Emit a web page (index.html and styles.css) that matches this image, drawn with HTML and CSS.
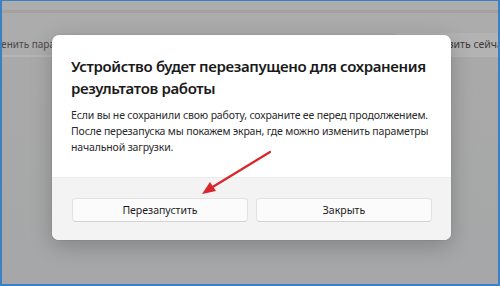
FILE: index.html
```html
<!DOCTYPE html>
<html lang="ru">
<head>
<meta charset="utf-8">
<link rel="stylesheet" href="styles.css">
</head>
<body>
<div class="screen">
  <div class="topbar"></div>
  <div class="band">
    <div class="row">
      <span class="row-text">Изменить параметры</span>
      <span class="row-btn">Перезагрузить сейчас</span>
    </div>
  </div>
  <div class="lower"></div>

  <div class="dialog">
    <div class="dialog-body">
      <h1 class="title">Устройство будет перезапущено для сохранения результатов работы</h1>
      <p class="text">Если вы не сохранили свою работу, сохраните ее перед продолжением. После перезапуска мы покажем экран, где можно изменить параметры начальной загрузки.</p>
    </div>
    <div class="dialog-footer">
      <button class="btn">Перезапустить</button>
      <button class="btn">Закрыть</button>
    </div>
  </div>

  <svg class="arrow" width="500" height="286" viewBox="0 0 500 286">
    <line x1="270" y1="152" x2="211" y2="188" stroke="#d8262a" stroke-width="2.2" stroke-linecap="round"/>
    <polygon points="202,194 210,182 216,191" fill="#d8262a"/>
  </svg>
</div>
</body>
</html>
```

FILE: styles.css
```css
* { box-sizing: border-box; }
html, body { margin: 0; padding: 0; }
body {
  width: 500px;
  height: 286px;
  overflow: hidden;
  font-family: "Noto Sans", "Open Sans", sans-serif;
}
.screen {
  position: relative;
  width: 500px;
  height: 286px;
  border: 2px solid #3a80c2;
  border-top-width: 1px;
  background: #a7a8a9;
  overflow: hidden;
  display: flex;
  flex-direction: column;
}
.topbar {
  height: 12px;
  background: #adadad;
  border-bottom: 3px solid #a2a2a2;
  flex: none;
}
.band {
  height: 44px;
  background: #acacac;
  border-bottom: 2px solid #b4b4b4;
  display: flex;
  align-items: flex-end;
  flex: none;
}
.row {
  height: 22px;
  width: 100%;
  display: flex;
  justify-content: space-between;
  align-items: center;
}
.row-text {
  margin-left: -21px;
  font-size: 10px;
  color: #4a4a4a;
  white-space: nowrap;
}
.row-btn {
  height: 22px;
  display: flex;
  align-items: center;
  padding: 0 6px 0 0;
  margin-right: -16px;
  font-size: 10.5px;
  color: #3a3a3a;
  background: #b3b3b3;
  white-space: nowrap;
}
.lower {
  flex: 1;
  background: linear-gradient(#a9a9a9, #a6a7a8);
}
.dialog {
  position: absolute;
  left: 50px;
  top: 34px;
  width: 399px;
  height: 205px;
  background: #fff;
  border-radius: 7px;
  overflow: hidden;
  box-shadow: 0 6px 22px rgba(0,0,0,0.22), 0 0 0 1px rgba(0,0,0,0.04);
  display: flex;
  flex-direction: column;
}
.dialog-body {
  flex: 1;
  padding: 20px 14px 0 19px;
}
.title {
  margin: 0;
  font-size: 15px;
  letter-spacing: -0.35px;
  line-height: 22px;
  font-weight: 600;
  color: #1a1a1a;
}
.text {
  margin: 8px 0 0;
  font-size: 10.5px;
  letter-spacing: -0.15px;
  line-height: 16px;
  color: #2a2a2a;
}
.dialog-footer {
  height: 63px;
  flex: none;
  background: #f3f3f3;
  border-top: 1px solid #ebebeb;
  padding: 20px 19px 0 20px;
  display: flex;
  gap: 8px;
  align-items: flex-start;
}
.btn {
  flex: 1;
  height: 24px;
  border: 1px solid #e2e2e2;
  border-bottom-color: #d2d2d2;
  border-radius: 4px;
  background: #fbfbfb;
  font-family: inherit;
  font-size: 10.5px;
  color: #1c1c1c;
  padding: 0;
}
.arrow {
  position: absolute;
  left: -2px;
  top: -1px;
  pointer-events: none;
}
```
